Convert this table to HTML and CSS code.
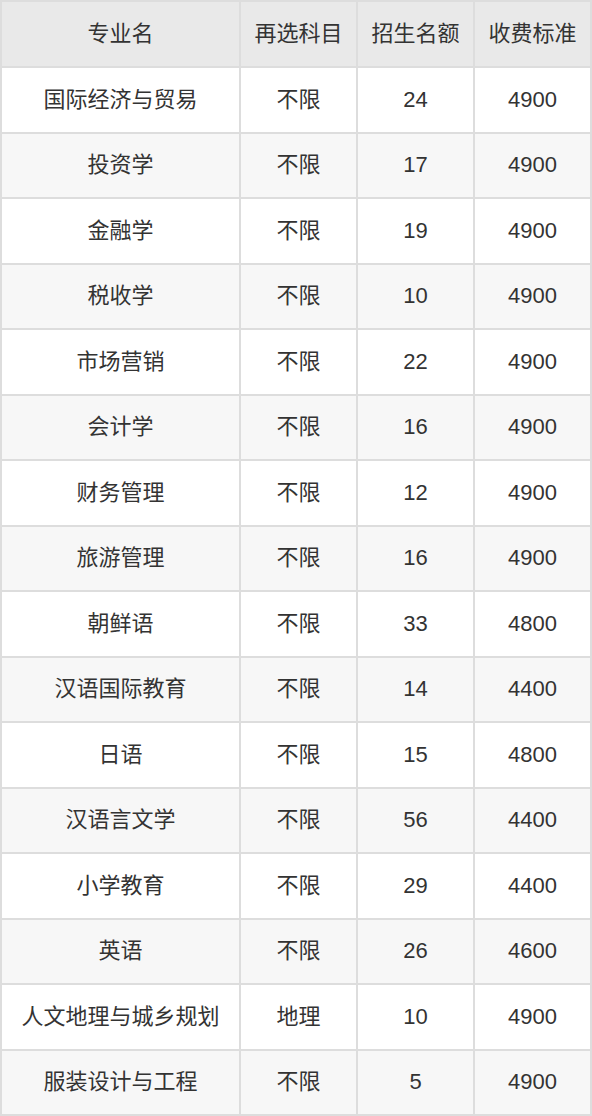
FILE: index.html
```html
<!DOCTYPE html>
<html lang="zh-CN">
<head>
<meta charset="utf-8">
<title>专业招生计划</title>
<link rel="stylesheet" href="styles.css">
</head>
<body>
<table class="plan">
  <colgroup>
    <col class="c-name"><col class="c-sub"><col class="c-num"><col class="c-fee">
  </colgroup>
  <thead>
    <tr><th>专业名</th><th>再选科目</th><th>招生名额</th><th>收费标准</th></tr>
  </thead>
  <tbody>
    <tr><td>国际经济与贸易</td><td>不限</td><td>24</td><td>4900</td></tr>
    <tr><td>投资学</td><td>不限</td><td>17</td><td>4900</td></tr>
    <tr><td>金融学</td><td>不限</td><td>19</td><td>4900</td></tr>
    <tr><td>税收学</td><td>不限</td><td>10</td><td>4900</td></tr>
    <tr><td>市场营销</td><td>不限</td><td>22</td><td>4900</td></tr>
    <tr><td>会计学</td><td>不限</td><td>16</td><td>4900</td></tr>
    <tr><td>财务管理</td><td>不限</td><td>12</td><td>4900</td></tr>
    <tr><td>旅游管理</td><td>不限</td><td>16</td><td>4900</td></tr>
    <tr><td>朝鲜语</td><td>不限</td><td>33</td><td>4800</td></tr>
    <tr><td>汉语国际教育</td><td>不限</td><td>14</td><td>4400</td></tr>
    <tr><td>日语</td><td>不限</td><td>15</td><td>4800</td></tr>
    <tr><td>汉语言文学</td><td>不限</td><td>56</td><td>4400</td></tr>
    <tr><td>小学教育</td><td>不限</td><td>29</td><td>4400</td></tr>
    <tr><td>英语</td><td>不限</td><td>26</td><td>4600</td></tr>
    <tr><td>人文地理与城乡规划</td><td>地理</td><td>10</td><td>4900</td></tr>
    <tr><td>服装设计与工程</td><td>不限</td><td>5</td><td>4900</td></tr>
  </tbody>
</table>
</body>
</html>
```

FILE: styles.css
```css
html, body {
  margin: 0;
  padding: 0;
  background: #ffffff;
}

.plan {
  width: 592px;
  table-layout: fixed;
  border-collapse: separate;
  border-spacing: 2px;
  background: #dddddd;
  font-family: "Liberation Sans", "Noto Sans CJK SC", sans-serif;
  font-size: 22px;
  line-height: 22px;
  color: #333333;
}

.c-name { width: 237px; }
.c-sub, .c-num, .c-fee { width: 115px; }

.plan th,
.plan td {
  padding: 0;
  text-align: center;
  vertical-align: middle;
  white-space: nowrap;
}

.plan th {
  height: 64px;
  font-weight: normal;
  background: #e9e9e9;
}

.plan td {
  height: 63.5px;
  background: #ffffff;
}

.plan tbody tr:nth-child(even) td {
  background: #f7f7f7;
}
```
